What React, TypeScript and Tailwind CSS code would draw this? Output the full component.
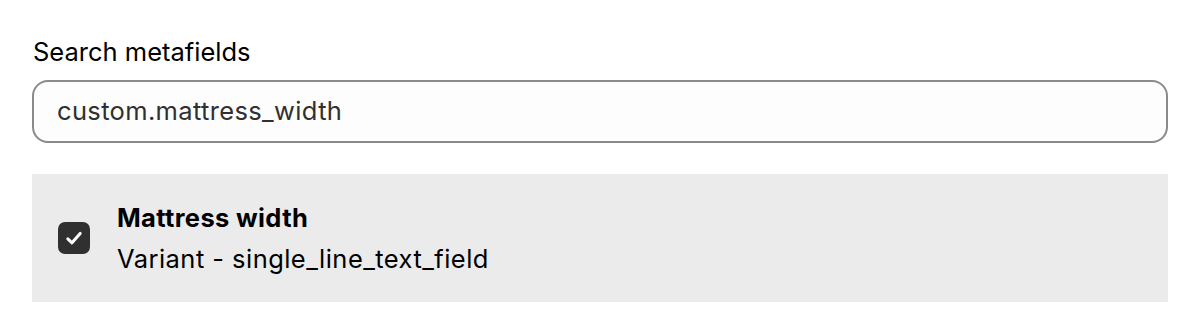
import React from 'react';

export default function App() {
    return (
        <div
            className="w-[1200px] h-[334px] bg-white px-[32px] pt-[36px]"
            style={{ fontFamily: 'Inter, "Noto Sans", sans-serif' }}
        >
            {/* Search field */}
            <label className="block text-[25.5px] leading-[32px] text-[#000000] pl-px mb-[12px]">
                Search metafields
            </label>
            <div className="h-[63px] w-full rounded-[16px] border-2 border-[#8a8a8a] bg-[#fdfdfd] flex items-center px-[23px]">
                <span className="text-[25.5px] tracking-[0.35px] text-[#303030]">custom.mattress_width</span>
            </div>

            {/* Result row */}
            <div className="mt-[31px] h-[128px] w-full bg-[#ebebeb] flex items-center pl-[26px]">
                <div className="w-[32px] h-[32px] rounded-[7px] bg-[#303030] shrink-0">
                    <svg width="32" height="32" viewBox="0 0 32 32" fill="none">
                        <path
                            d="M9.8 16.8l4.2 4 8.2-9.4"
                            stroke="white"
                            strokeWidth="3"
                            strokeLinecap="round"
                            strokeLinejoin="round"
                        />
                    </svg>
                </div>
                <div className="ml-[27px] flex flex-col">
                    <span className="text-[25.5px] leading-[41px] font-bold tracking-[0.35px] text-[#000000]">
                        Mattress width
                    </span>
                    <span className="text-[25.5px] leading-[41px] tracking-[0.45px] text-[#000000]">
                        Variant - single_line_text_field
                    </span>
                </div>
            </div>
        </div>
    );
}
